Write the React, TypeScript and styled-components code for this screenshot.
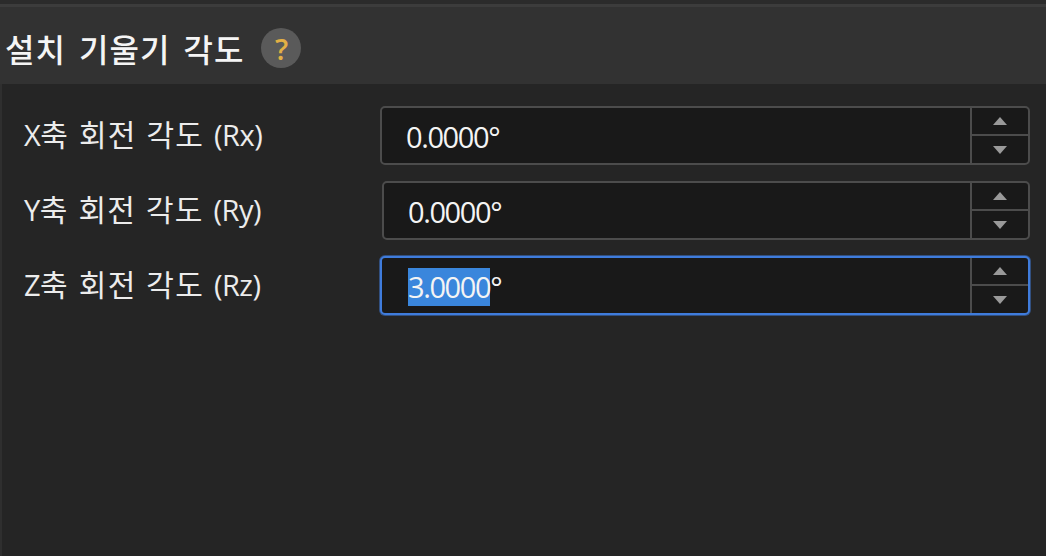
import styled, { createGlobalStyle } from "styled-components";

interface Iaxis {
  id: string;
  axis: string;
  code: string;
  value: string;
  selected?: string;
  offset?: number;
}

const axes: Iaxis[] = [
  { id: "rx", axis: "X", code: "(Rx)", value: "0.0000°" },
  { id: "ry", axis: "Y", code: "(Ry)", value: "0.0000°", offset: 2 },
  { id: "rz", axis: "Z", code: "(Rz)", value: "°", selected: "3.0000" },
];

const App = () => {
  return (
    <>
      <GlobalStyle />
      <Page>
        <TopStrip />
        <Header>
          <Title>설치 기울기 각도</Title>
          <Help>?</Help>
        </Header>
        <Body>
          {axes.map((item: Iaxis) => (
            <Row key={item.id}>
              <Label>
                <Code>{item.axis}</Code>축 회전 각도 <Code>{item.code}</Code>
              </Label>
              <Spin $focus={!!item.selected} $offset={item.offset || 0}>
                <Value>
                  {item.selected && <Selected>{item.selected}</Selected>}
                  {item.value}
                </Value>
                <Arrows>
                  <Arrow>
                    <svg width="16" height="10" viewBox="0 0 16 10">
                      <path d="M8 1 15 9H1Z" fill="#9a9a9a" />
                    </svg>
                  </Arrow>
                  <Arrow>
                    <svg width="16" height="10" viewBox="0 0 16 10">
                      <path d="M1 1H15L8 9Z" fill="#9a9a9a" />
                    </svg>
                  </Arrow>
                </Arrows>
              </Spin>
            </Row>
          ))}
        </Body>
      </Page>
    </>
  );
};

const GlobalStyle = createGlobalStyle`
  html, body {
    margin: 0;
    padding: 0;
    background: #252525;
  }
  * {
    box-sizing: border-box;
  }
`;
const Page = styled.div`
  width: 1046px;
  height: 556px;
  display: flex;
  flex-direction: column;
  overflow: hidden;
  background: #252525;
  color: #f2f2f2;
  font-family: "Open Sans", "Noto Sans CJK KR", sans-serif;
`;
const TopStrip = styled.div`
  height: 7px;
  background: #2b2b2b;
  border-bottom: 3px solid #3c3c3c;
`;
const Header = styled.div`
  height: 77px;
  padding: 5px 0 0 5px;
  display: flex;
  align-items: center;
  gap: 17px;
  background: #323232;
`;
const Title = styled.h1`
  margin: 0;
  font-family: "Noto Sans CJK KR", sans-serif;
  font-size: 32px;
  font-weight: 500;
  letter-spacing: 1px;
  word-spacing: 5px;
  color: #f5f5f5;
`;
const Help = styled.span`
  width: 40px;
  height: 40px;
  display: flex;
  align-items: center;
  justify-content: center;
  border-radius: 50%;
  background: #5a5a5a;
  color: #e2b045;
  font-size: 29px;
  font-weight: 600;
`;
const Body = styled.div`
  flex: 1;
  padding: 22px 16px 0 24px;
  display: flex;
  flex-direction: column;
  gap: 16px;
  background: #252525;
  border-left: 2px solid #2f2f2f;
`;
const Row = styled.div`
  height: 59px;
  display: flex;
  align-items: center;
  margin-left: -2px;
`;
const Label = styled.label`
  width: 356px;
  flex: none;
  padding-bottom: 5px;
  font-family: "Noto Sans CJK KR", sans-serif;
  font-size: 30px;
  font-weight: 400;
  letter-spacing: 1.2px;
  word-spacing: 2px;
  color: #ececec;
  white-space: nowrap;
`;
const Code = styled.span`
  font-family: "Open Sans", sans-serif;
  font-weight: 400;
  font-size: 29px;
  letter-spacing: -0.5px;
`;
const Spin = styled.div<{ $focus: boolean; $offset: number }>`
  flex: 1;
  height: 59px;
  margin-left: ${(p) => p.$offset}px;
  display: flex;
  background: #191919;
  border: 2px solid ${(p) => (p.$focus ? "#3f7cdc" : "#4c4c4c")};
  border-radius: 5px;
  box-shadow: ${(p) => (p.$focus ? "0 0 0 1px rgba(63, 124, 220, 0.5)" : "none")};
`;
const Value = styled.div`
  flex: 1;
  padding: 2px 0 0 24px;
  display: flex;
  align-items: center;
  font-size: 29px;
  letter-spacing: -1.4px;
  color: #f4f4f4;
`;
const Selected = styled.span`
  height: 38px;
  margin-left: 2px;
  display: flex;
  align-items: center;
  background: #3a86dc;
  color: #f4f4f4;
`;
const Arrows = styled.div`
  width: 58px;
  flex: none;
  display: flex;
  flex-direction: column;
  border-left: 2px solid #4c4c4c;
`;
const Arrow = styled.div`
  flex: 1;
  display: flex;
  align-items: center;
  justify-content: center;
  &:first-child {
    flex: 0 0 26px;
  }
  & + & {
    border-top: 2px solid #4c4c4c;
  }
`;
export default App;
